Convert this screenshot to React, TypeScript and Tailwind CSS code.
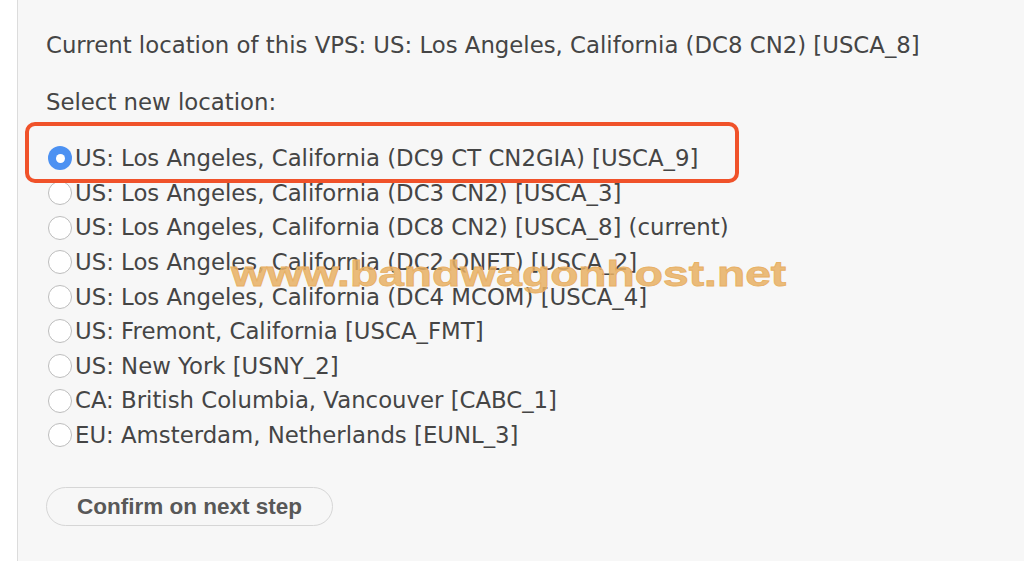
import React from 'react';

const locations = [
  { label: 'US: Los Angeles, California (DC9 CT CN2GIA) [USCA_9]', checked: true },
  { label: 'US: Los Angeles, California (DC3 CN2) [USCA_3]' },
  { label: 'US: Los Angeles, California (DC8 CN2) [USCA_8] (current)' },
  { label: 'US: Los Angeles, California (DC2 QNET) [USCA_2]' },
  { label: 'US: Los Angeles, California (DC4 MCOM) [USCA_4]' },
  { label: 'US: Fremont, California [USCA_FMT]' },
  { label: 'US: New York [USNY_2]' },
  { label: 'CA: British Columbia, Vancouver [CABC_1]' },
  { label: 'EU: Amsterdam, Netherlands [EUNL_3]' },
];

function Radio({ checked }: { checked?: boolean }) {
  if (checked) {
    return (
      <span className="w-[24px] h-[24px] rounded-full bg-[#4c91f2] flex items-center justify-center shrink-0">
        <span className="w-[9px] h-[9px] rounded-full bg-white" />
      </span>
    );
  }
  return <span className="w-[24px] h-[24px] rounded-full bg-white border border-[#bdbdbd] shrink-0" />;
}

export default function App() {
  return (
    <div className="w-[1024px] h-[561px] flex overflow-hidden bg-[#f7f7f7] font-['DejaVu_Sans',Verdana,sans-serif] text-[#454545]">
      <div className="w-[18px] shrink-0 bg-white border-r border-[#dcdcdc]" />
      <div className="relative flex-1 pl-[28px] pt-[28px]">
        <div className="text-[22.8px] leading-[34.6px] whitespace-nowrap">
          Current location of this VPS: US: Los Angeles, California (DC8 CN2) [USCA_8]
        </div>
        <div className="text-[22.8px] leading-[34.6px] mt-[22.6px]">Select new location:</div>

        <div className="relative mt-[21.4px]">
          {locations.map((loc) => (
            <label key={loc.label} className="flex items-center h-[34.6px] ml-[2px] gap-[3px] text-[22.8px] leading-[34.6px] whitespace-nowrap">
              <Radio checked={loc.checked} />
              <span>{loc.label}</span>
            </label>
          ))}
          <div className="absolute left-[-21px] top-[-19px] w-[714px] h-[61px] border-[4px] border-[#f0522a] rounded-[10px] pointer-events-none" />
        </div>

        <button className="mt-[34.7px] w-[287px] h-[39px] rounded-full border border-[#d6d6d6] bg-[#f7f7f7] text-[22.5px] font-bold text-[#585858] font-['Liberation_Sans',Arial,sans-serif] text-left pl-[30px]">
          Confirm on next step
        </button>

        <div className="absolute left-[213px] top-[256px] text-[35px] leading-none font-bold text-[#e8b064]/85 [-webkit-text-stroke:0.8px_#e8b064] font-['Liberation_Sans',Arial,sans-serif] origin-left scale-x-[1.32] whitespace-nowrap pointer-events-none">
          www.bandwagonhost.net
        </div>
      </div>
    </div>
  );
}
